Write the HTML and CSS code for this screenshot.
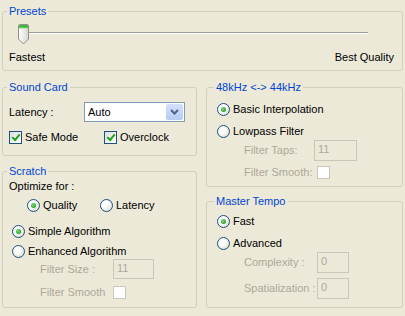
FILE: index.html
```html
<!DOCTYPE html>
<html lang="en">

<head>
  <meta charset="UTF-8">
  <title>Sound Options</title>
  <link rel="stylesheet" href="styles.css">
</head>

<body>
  <div class="dialog">
    <fieldset class="group presets">
      <legend>Presets</legend>
      <div class="slider">
        <div class="track"></div>
        <svg class="thumb" width="11" height="21" viewBox="0 0 11 21">
          <defs>
            <linearGradient id="thumbBody" x1="0" y1="0" x2="1" y2="0">
              <stop offset="0" stop-color="#ffffff" />
              <stop offset="1" stop-color="#d8d8d0" />
            </linearGradient>
          </defs>
          <path d="M0.5 2 Q0.5 0.5 2 0.5 H9 Q10.5 0.5 10.5 2 V15 L5.5 20 L0.5 15 Z" fill="url(#thumbBody)" stroke="#8f8f86" />
          <path d="M1 2 Q1 1 2 1 H9 Q10 1 10 2 V4 H1 Z" fill="#3db83d" />
          <path d="M1.5 4 H9.5" stroke="#8ee08e" />
        </svg>
      </div>
      <div class="slider-labels">
        <span>Fastest</span>
        <span>Best Quality</span>
      </div>
    </fieldset>

    <div class="columns">
      <div class="col">
        <fieldset class="group sound-card">
          <legend>Sound Card</legend>
          <div class="latency-row">
            <span class="latency-label">Latency :</span>
            <div class="combo">
              <span class="combo-value">Auto</span>
              <span class="combo-btn">
                <svg width="9" height="6" viewBox="0 0 9 6">
                  <path d="M1 1 L4.5 4.5 L8 1" fill="none" stroke="#4d6185" stroke-width="2" />
                </svg>
              </span>
            </div>
          </div>
          <div class="row checks-row">
            <label class="opt safe-mode"><span class="check on"></span>Safe Mode</label>
            <label class="opt"><span class="check on"></span>Overclock</label>
          </div>
        </fieldset>

        <fieldset class="group scratch">
          <legend>Scratch</legend>
          <div class="row optimize">Optimize for :</div>
          <div class="row optimize-choice">
            <label class="opt quality"><span class="radio on"></span>Quality</label>
            <label class="opt"><span class="radio"></span>Latency</label>
          </div>
          <div class="row algo simple">
            <label class="opt"><span class="radio on"></span>Simple Algorithm</label>
          </div>
          <div class="row algo enhanced">
            <label class="opt"><span class="radio"></span>Enhanced Algorithm</label>
          </div>
          <div class="field-row size-row">
            <span class="field-label">Filter Size :</span>
            <span class="field-box w41">11</span>
          </div>
          <div class="row sub-row smooth-row">
            <span class="field-label">Filter Smooth</span>
            <span class="check disabled"></span>
          </div>
        </fieldset>
      </div>

      <div class="col">
        <fieldset class="group khz">
          <legend>48kHz &lt;-&gt; 44kHz</legend>
          <div class="row choice first">
            <label class="opt"><span class="radio on"></span>Basic Interpolation</label>
          </div>
          <div class="row choice">
            <label class="opt"><span class="radio"></span>Lowpass Filter</label>
          </div>
          <div class="field-row taps-row">
            <span class="field-label taps-label">Filter Taps:</span>
            <span class="field-box w43">11</span>
          </div>
          <div class="row sub-row khz-smooth">
            <span class="field-label">Filter Smooth:</span>
            <span class="check disabled"></span>
          </div>
        </fieldset>

        <fieldset class="group tempo">
          <legend>Master Tempo</legend>
          <div class="row choice first">
            <label class="opt"><span class="radio on"></span>Fast</label>
          </div>
          <div class="row choice">
            <label class="opt"><span class="radio"></span>Advanced</label>
          </div>
          <div class="field-row tempo-field first-field">
            <span class="field-label">Complexity :</span>
            <span class="field-box w32">0</span>
          </div>
          <div class="field-row tempo-field">
            <span class="field-label">Spatialization :</span>
            <span class="field-box w32">0</span>
          </div>
        </fieldset>
      </div>
    </div>
  </div>
</body>

</html>
```

FILE: styles.css
```css
html, body {
  margin: 0;
  padding: 0;
  background-color: #ece9d8;
}

body {
  font-family: 'Liberation Sans', Arial, sans-serif;
  font-size: 11px;
  line-height: 13px;
  color: #000;
}

.dialog {
  width: 405px;
  height: 316px;
  box-sizing: border-box;
  padding: 5px 2px 0 2px;
}

.group {
  margin: 0;
  padding: 0;
  min-width: 0;
  border: 1px solid #d0d0bf;
  border-radius: 3px;
}

.group legend {
  margin-left: 4px;
  padding: 0 2px;
  line-height: 13px;
  color: #0046d5;
}

/* presets slider */
.presets {
  padding-bottom: 6px;
}

.slider {
  position: relative;
  width: 350px;
  height: 21px;
  box-sizing: border-box;
  padding-top: 9px;
  margin: 5px 0 0 15px;
}

.track {
  height: 0;
  border-top: 1px solid #9d9c99;
  border-bottom: 1px solid #fff;
}

.thumb {
  position: absolute;
  left: 0;
  top: 1px;
}

.slider-labels {
  display: flex;
  justify-content: space-between;
  height: 13px;
  margin-top: 7px;
  padding: 0 8px 0 6px;
}

.columns {
  display: grid;
  grid-template-columns: 195px 197px;
  column-gap: 9px;
  margin-top: 10px;
}

.col {
  display: flex;
  flex-direction: column;
}

.row {
  display: flex;
  align-items: center;
  height: 13px;
}

.opt {
  display: flex;
  align-items: center;
  white-space: nowrap;
}

/* radio buttons and check boxes */
.radio, .check {
  flex: none;
  width: 13px;
  height: 13px;
  box-sizing: border-box;
  margin-right: 3px;
  border: 1px solid #1c5180;
  display: flex;
  align-items: center;
  justify-content: center;
}

.radio {
  border-radius: 50%;
  background: radial-gradient(circle at 35% 35%, #ffffff 30%, #e2e2da 75%, #cfcfc4 100%);
}

.radio.on::after {
  content: '';
  width: 5px;
  height: 5px;
  border-radius: 50%;
  background: radial-gradient(circle at 40% 40%, #7fe07f, #21a121 70%);
}

.check {
  background: linear-gradient(135deg, #dcdcd7, #ffffff);
}

.check.on::after {
  content: '';
  width: 6px;
  height: 3px;
  margin-top: -3px;
  border-left: 2px solid #21a121;
  border-bottom: 2px solid #21a121;
  transform: rotate(-50deg);
}

.check.disabled {
  border-color: #cac8bb;
  background: #fff;
}

/* sound card */
.sound-card {
  padding-bottom: 11px;
}

.latency-row {
  display: flex;
  align-items: center;
  height: 20px;
  margin-top: 8px;
  padding-left: 6px;
}

.latency-label {
  width: 75px;
}

.combo {
  display: flex;
  align-items: center;
  width: 101px;
  height: 20px;
  box-sizing: border-box;
  border: 1px solid #7f9db9;
  background: #fff;
  padding: 1px;
}

.combo-value {
  flex: 1;
  padding-left: 2px;
}

.combo-btn {
  display: flex;
  align-items: center;
  justify-content: center;
  width: 17px;
  height: 16px;
  border-radius: 2px;
  background: linear-gradient(#d4e0fc, #b6caf6);
}

.checks-row {
  margin-top: 9px;
  padding-left: 6px;
}

.safe-mode {
  width: 95px;
}

/* scratch */
.scratch {
  margin-top: 9px;
  padding-bottom: 8px;
}

.optimize {
  margin-top: 2px;
  padding-left: 6px;
}

.optimize-choice {
  margin-top: 6px;
  padding-left: 24px;
}

.quality {
  width: 73px;
}

.algo {
  padding-left: 9px;
}

.simple {
  margin-top: 13px;
}

.enhanced {
  margin-top: 7px;
}

.field-row {
  display: flex;
  align-items: center;
  height: 21px;
  padding-left: 37px;
}

.field-label {
  width: 73px;
  color: #aca899;
  white-space: nowrap;
}

.field-box {
  height: 100%;
  box-sizing: border-box;
  border: 1px solid #c9c7ba;
  padding: 2px 3px;
  color: #aca899;
}

.w41 { width: 41px; }
.w43 { width: 43px; }
.w32 { width: 32px; }

.size-row {
  height: 20px;
  margin-top: 1px;
}

.sub-row {
  padding-left: 37px;
}

.smooth-row {
  margin-top: 7px;
}

/* 48kHz and master tempo */
.khz legend, .tempo legend {
  margin-left: 7px;
}

.khz {
  padding-bottom: 7px;
}

.choice {
  margin-top: 9px;
  padding-left: 10px;
}

.tempo .choice.first {
  margin-top: 7px;
}

.taps-row {
  margin-top: 2px;
}

.taps-label {
  width: 70px;
}

.khz-smooth {
  margin-top: 5px;
}

.tempo {
  margin-top: 8px;
  padding-bottom: 8px;
}

.tempo-field {
  margin-top: 5px;
}

.tempo-field.first-field {
  margin-top: 2px;
}
```
